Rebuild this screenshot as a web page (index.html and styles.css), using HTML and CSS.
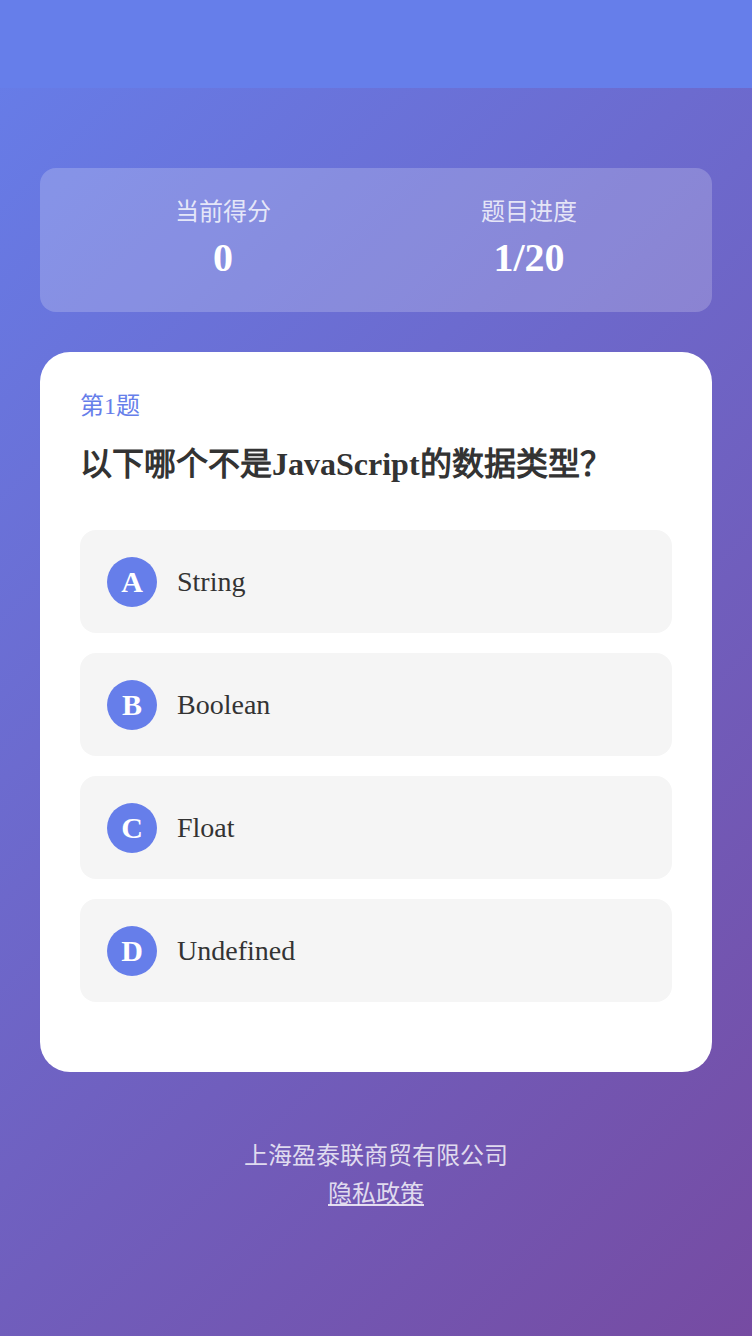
FILE: index.html
```html
<!DOCTYPE html>
<html lang="zh-CN">
<head>
    <meta charset="UTF-8">
    <meta name="viewport" content="width=device-width, initial-scale=1.0">
    <title>答题</title>
    <link rel="stylesheet" href="styles.css">
</head>
<body>
    <div class="page">
        <div class="topbar"></div>

        <div class="main">
            <div class="stats">
                <div class="stat">
                    <div class="stat-label">当前得分</div>
                    <div class="stat-value">0</div>
                </div>
                <div class="stat">
                    <div class="stat-label">题目进度</div>
                    <div class="stat-value">1/20</div>
                </div>
            </div>

            <div class="quiz">
                <div class="quiz-num">第1题</div>
                <div class="quiz-title">以下哪个不是JavaScript的数据类型？</div>

                <div class="options">
                    <div class="option">
                        <span class="option-key">A</span>
                        <span class="option-text">String</span>
                    </div>
                    <div class="option">
                        <span class="option-key">B</span>
                        <span class="option-text">Boolean</span>
                    </div>
                    <div class="option">
                        <span class="option-key">C</span>
                        <span class="option-text">Float</span>
                    </div>
                    <div class="option">
                        <span class="option-key">D</span>
                        <span class="option-text">Undefined</span>
                    </div>
                </div>
            </div>

            <div class="footer">
                <div class="company">上海盈泰联商贸有限公司</div>
                <a class="privacy" href="#">隐私政策</a>
            </div>
        </div>
    </div>
</body>
</html>
```

FILE: styles.css
```css
html, body {
    margin: 0;
    padding: 0;
}
body {
    font-family: "Liberation Serif", serif;
    color: #333;
}
.page {
    min-height: 1336px;
    background: linear-gradient(135deg, #667eea 0%, #764ba2 100%);
}
.topbar {
    height: 88px;
    background: #667eea;
}
.main {
    padding: 80px 40px 0;
}

/* stats */
.stats {
    display: flex;
    padding: 30px;
    border-radius: 16px;
    background: rgba(255, 255, 255, 0.2);
}
.stat {
    flex: 1;
    text-align: center;
}
.stat-label {
    font-size: 24px;
    line-height: 28px;
    color: rgba(255, 255, 255, 0.8);
}
.stat-value {
    margin-top: 8px;
    font-size: 40px;
    line-height: 48px;
    font-weight: bold;
    color: #fff;
}

/* quiz card */
.quiz {
    margin-top: 40px;
    padding: 40px;
    border-radius: 30px;
    background: #fff;
}
.quiz-num {
    font-size: 24px;
    line-height: 28px;
    color: #667eea;
}
.quiz-title {
    margin-top: 22px;
    font-size: 32px;
    line-height: 44px;
    font-weight: bold;
    color: #333;
}
.options {
    margin: 44px 0 30px;
    display: flex;
    flex-direction: column;
    gap: 20px;
}
.option {
    display: flex;
    align-items: center;
    gap: 20px;
    height: 103px;
    padding: 0 27px;
    box-sizing: border-box;
    border-radius: 16px;
    background: #f5f5f5;
}
.option-key {
    width: 50px;
    height: 50px;
    border-radius: 50%;
    background: #667eea;
    color: #fff;
    font-size: 30px;
    font-weight: bold;
    display: flex;
    align-items: center;
    justify-content: center;
}
.option-text {
    font-size: 28px;
    color: #333;
}

/* footer */
.footer {
    padding-top: 65px;
    text-align: center;
    font-size: 24px;
    line-height: 38px;
    color: rgba(255, 255, 255, 0.8);
}
.privacy {
    color: rgba(255, 255, 255, 0.8);
}
```
